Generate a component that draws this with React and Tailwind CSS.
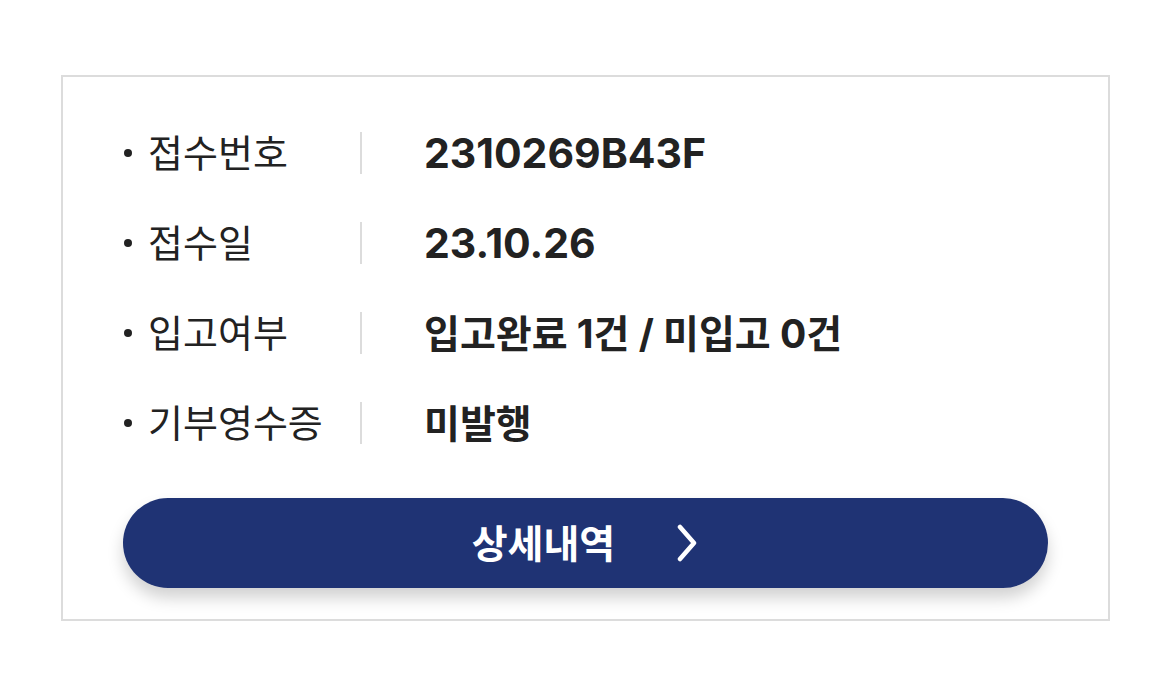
import React from "react";

const rows = [
  ["접수번호", "2310269B43F", "text-[41px]"],
  ["접수일", "23.10.26", "text-[41px]"],
  ["입고여부", "입고완료 1건 / 미입고 0건", "text-[39px]"],
  ["기부영수증", "미발행", "text-[39px]"],
];

export default function App() {
  return (
    <div
      className="w-[1170px] h-[694px] bg-white pt-[75px] pl-[61px]"
      style={{ fontFamily: '"Inter", "Noto Sans CJK KR", sans-serif' }}
    >
      <div className="w-[1049px] h-[546px] border-2 border-[#dcdcdc] px-[60px] pt-[31px] pb-[30px] flex flex-col">
        {rows.map(([label, value, size]) => (
          <div key={label} className="h-[90px] flex items-center">
            <div className="w-[237px] flex items-center text-[38px] leading-none text-[#222]">
              <span className="w-[8px] h-[8px] rounded-full bg-[#222] ml-[1px] mr-[16px]" />
              <span>{label}</span>
            </div>
            <div className="w-[2px] h-[42px] bg-[#dcdcdc]" />
            <div className={`ml-[62px] leading-none font-bold text-[#222] ${size}`}>
              {value}
            </div>
          </div>
        ))}
        <button className="mt-[30px] h-[90px] w-full rounded-full bg-[#1f3374] shadow-[0_10px_16px_rgba(0,0,0,0.18)] flex items-center justify-center gap-[60px] text-white">
          <span className="text-[39px] leading-none font-bold">상세내역</span>
          <svg width="24" height="38" viewBox="0 0 24 38" fill="none">
            <path d="M5 3 L19 19 L5 35" stroke="white" strokeWidth="4.5" strokeLinecap="round" strokeLinejoin="round" />
          </svg>
        </button>
      </div>
    </div>
  );
}
